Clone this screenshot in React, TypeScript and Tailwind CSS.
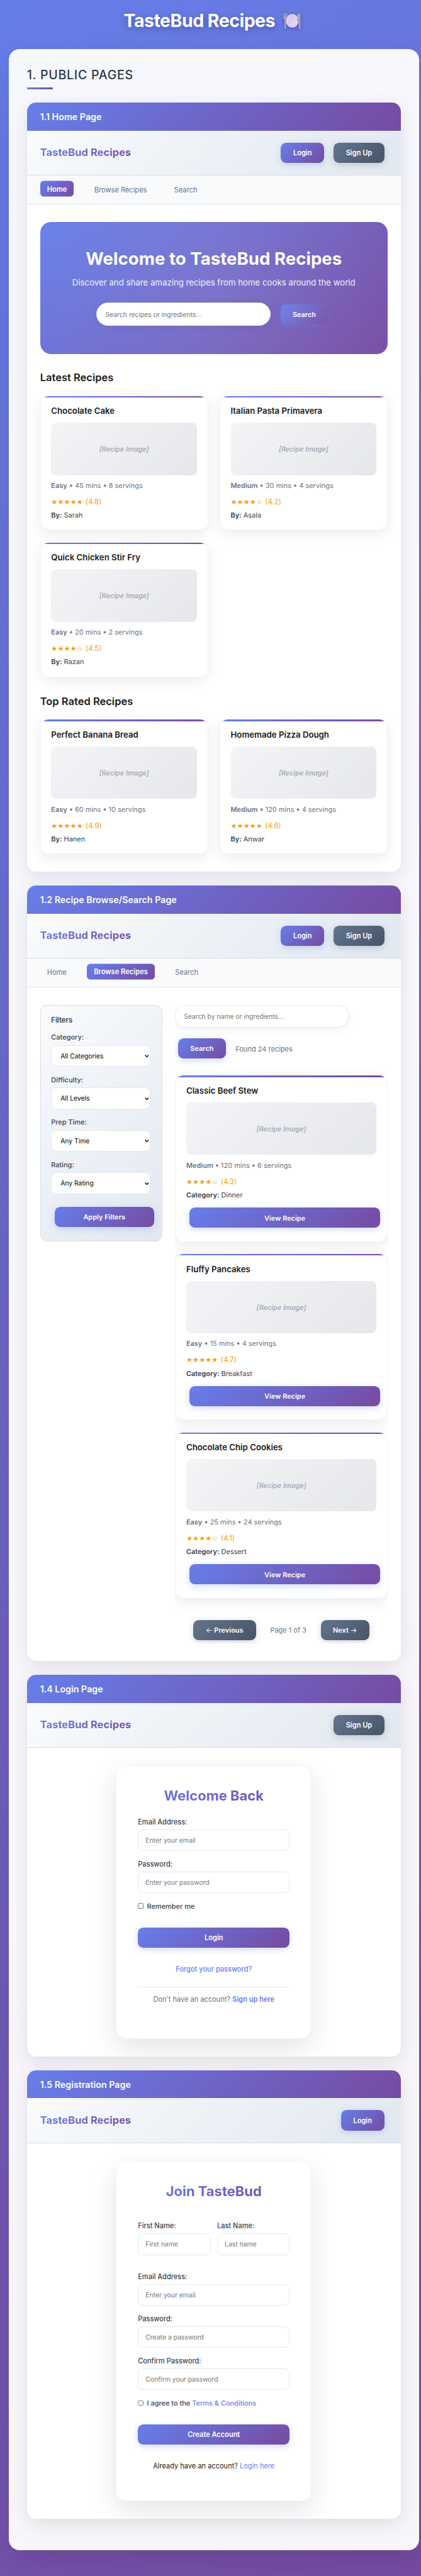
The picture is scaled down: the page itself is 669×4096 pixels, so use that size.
import React from "react";

const FONT = "font-['Inter','Noto_Sans',sans-serif]";
const PRIMARY = "bg-[linear-gradient(135deg,#667eea_0%,#764ba2_100%)]";
const SLATE = "bg-[linear-gradient(135deg,#64748b_0%,#475569_100%)]";

function Button({
  children,
  tone = "primary",
  className = "",
}: {
  children: React.ReactNode;
  tone?: "primary" | "secondary";
  className?: string;
}) {
  const toneClass =
    tone === "primary"
      ? `${PRIMARY} shadow-[0_5px_19px_rgba(102,126,234,0.3)]`
      : `${SLATE} shadow-[0_5px_19px_rgba(100,116,139,0.3)]`;
  return (
    <button
      className={`flex h-[58px] shrink-0 items-center justify-center whitespace-nowrap rounded-[16px] pt-[2px] font-semibold text-white ${toneClass} ${className}`}
    >
      {children}
    </button>
  );
}

function PlateIcon() {
  return (
    <svg
      viewBox="0 0 50 46"
      className="ml-[24px] h-[46px] w-[50px] drop-shadow-[0_5px_6px_rgba(0,0,0,0.3)]"
    >
      <defs>
        <linearGradient id="plate" x1="0" y1="0" x2="1" y2="1">
          <stop offset="0" stopColor="#cfc3ea" />
          <stop offset="1" stopColor="#e4daf5" />
        </linearGradient>
      </defs>
      <ellipse cx="26" cy="21.8" rx="18.4" ry="19.6" fill="#dccff2" />
      <ellipse cx="26" cy="21.8" rx="12.8" ry="13.6" fill="url(#plate)" />
      <path
        d="M0.6 1h2.2v9h1.6V1h2.6v9h1.6V1H12v11c0 3-1.6 4.6-3.6 5.6V43.2a1.5 1.5 0 0 1-1.5 1.5H5.5A1.5 1.5 0 0 1 4 43.2V17.6C2 16.6.6 15 .6 12z"
        fill="#ada3bf"
      />
      <path
        d="M44 0.8c3.2 0 5.4 2 5.4 5v37.4a1.5 1.5 0 0 1-1.5 1.5h-1.6a1.5 1.5 0 0 1-1.5-1.5V24c-2.6 0-4.6-1-4.6-3.4V6c0-3.2 1.4-5.2 3.8-5.2z"
        fill="#ada3bf"
      />
    </svg>
  );
}

function Brand() {
  return (
    <div
      className={`bg-clip-text pt-[1px] text-[29.95px] font-bold leading-[50px] text-transparent ${PRIMARY}`}
    >
      TasteBud Recipes
    </div>
  );
}

function Screen({
  title,
  actions,
  active,
  children,
}: {
  title: string;
  actions: React.ReactNode;
  active?: string;
  children: React.ReactNode;
}) {
  return (
    <section className="w-[1073px] overflow-hidden rounded-[26px] bg-white shadow-[0_13px_52px_rgba(0,0,0,0.1)]">
      <h3
        className={`flex h-[81px] items-center px-[38px] pt-[1.5px] text-[25.8px] font-semibold text-white ${PRIMARY}`}
      >
        {title}
      </h3>
      <div className="flex h-[128.5px] items-center justify-between border-b border-[#d6dce4] bg-[linear-gradient(135deg,#fafbfc_0%,#f1f5f9_30%,#e2e8f0_100%)] pl-[38px] pr-[47px]">
        <Brand />
        <div className="flex gap-[27px]">{actions}</div>
      </div>
      {active && (
        <nav className="flex h-[83px] items-center gap-[38.5px] border-b border-[#e2e5ea] bg-[#f9fafc] px-[38px]">
          {["Home", "Browse Recipes", "Search"].map((item) => (
            <a
              key={item}
              className={
                item === active
                  ? `flex h-[45.5px] -translate-y-[2.6px] items-center rounded-[10px] px-[20px] pt-[2px] text-[20.1px] font-semibold text-white ${PRIMARY}`
                  : "flex h-[45.5px] items-center px-[20px] pt-[2px] text-[20px] text-[#64748b]"
              }
            >
              {item}
            </a>
          ))}
        </nav>
      )}
      <div className="px-[38px] py-[50.5px]">{children}</div>
    </section>
  );
}

type Recipe = {
  name: string;
  level: string;
  info: string;
  stars: string;
  score: string;
  label: string;
  value: string;
};

function RecipeCard({ recipe, tall = false }: { recipe: Recipe; tall?: boolean }) {
  return (
    <article
      className={`overflow-hidden rounded-[24px] border border-[#f0f1f3] bg-white shadow-[0_10px_39px_rgba(0,0,0,0.08)] ${
        tall ? "h-[479px]" : "h-[388px]"
      }`}
    >
      <div className="h-[4.5px] bg-[linear-gradient(90deg,#667eea,#764ba2)]" />
      <div className={`pr-[30px] pt-[18.5px] ${tall ? "pl-[31px]" : "pl-[30px]"}`}>
        <h4 className="text-[23.9px] font-semibold leading-[42px] text-[#1a1a1a]">
          {recipe.name}
        </h4>
        <div className="mt-[12px] flex h-[150.5px] items-center justify-center rounded-[15px] bg-[linear-gradient(135deg,#f3f4f6_0%,#e5e7eb_100%)] pt-[2px] text-[19.76px] font-medium italic text-[#9ca3af]">
          [Recipe Image]
        </div>
        <p className="mt-[15px] text-[19.8px] leading-[32px] text-[#6b7280]">
          <span className="font-semibold">{recipe.level}</span> • {recipe.info}
        </p>
        <p className="mt-[15.4px] flex text-[20.6px] leading-[32px] text-[#f59e0b]">
          <span className="w-[99px] whitespace-nowrap font-['DejaVu_Sans'] text-[20.4px]">
            {recipe.stars}
          </span>
          ({recipe.score})
        </p>
        <p className="mt-[6.4px] text-[19.8px] leading-[32px] text-[#374151]">
          <span className="font-semibold">{recipe.label}:</span> {recipe.value}
        </p>
        {tall && (
          <Button className="ml-[10px] mt-[18.6px] w-[546px] text-[19.76px]">View Recipe</Button>
        )}
      </div>
    </article>
  );
}

const latest: Recipe[] = [
  { name: "Chocolate Cake", level: "Easy", info: "45 mins • 8 servings", stars: "★★★★★", score: "4.8", label: "By", value: "Sarah" },
  { name: "Italian Pasta Primavera", level: "Medium", info: "30 mins • 4 servings", stars: "★★★★☆", score: "4.2", label: "By", value: "Asala" },
  { name: "Quick Chicken Stir Fry", level: "Easy", info: "20 mins • 2 servings", stars: "★★★★☆", score: "4.5", label: "By", value: "Razan" },
];

const topRated: Recipe[] = [
  { name: "Perfect Banana Bread", level: "Easy", info: "60 mins • 10 servings", stars: "★★★★★", score: "4.9", label: "By", value: "Hanen" },
  { name: "Homemade Pizza Dough", level: "Medium", info: "120 mins • 4 servings", stars: "★★★★★", score: "4.8", label: "By", value: "Anwar" },
];

const results: Recipe[] = [
  { name: "Classic Beef Stew", level: "Medium", info: "120 mins • 6 servings", stars: "★★★★☆", score: "4.3", label: "Category", value: "Dinner" },
  { name: "Fluffy Pancakes", level: "Easy", info: "15 mins • 4 servings", stars: "★★★★★", score: "4.7", label: "Category", value: "Breakfast" },
  { name: "Chocolate Chip Cookies", level: "Easy", info: "25 mins • 24 servings", stars: "★★★★☆", score: "4.1", label: "Category", value: "Dessert" },
];

const filters = [
  ["Category:", "All Categories"],
  ["Difficulty:", "All Levels"],
  ["Prep Time:", "Any Time"],
  ["Rating:", "Any Rating"],
];

function SearchInput({ placeholder }: { placeholder: string }) {
  return (
    <input
      placeholder={placeholder}
      className="block h-[66.5px] w-[500px] rounded-[33px] border-2 border-[#e5e7eb] bg-white px-[24.5px] pt-[1px] text-[18.72px] shadow-[0_5px_26px_rgba(0,0,0,0.06)] placeholder:text-[#757575]"
    />
  );
}

function SectionTitle({ children, className }: { children: string; className: string }) {
  return (
    <h3
      className={`mb-[29px] text-[29.85px] font-semibold leading-[44px] text-[#1a1a1a] ${className}`}
    >
      {children}
    </h3>
  );
}

function HomePage() {
  return (
    <>
      <div className="flex h-[379px] flex-col items-center rounded-[31px] bg-[radial-gradient(circle_747px_at_center,rgba(255,255,255,0.1),rgba(255,255,255,0)),linear-gradient(135deg,#667eea_0%,#764ba2_100%)] pt-[74.5px] text-white">
        <h2 className="text-[49.9px] font-bold leading-[62.4px]">
          Welcome to TasteBud Recipes
        </h2>
        <p className="mt-[19.5px] text-[23.92px] leading-[38px] text-white/90">
          Discover and share amazing recipes from home cooks around the world
        </p>
        <div className="mt-[37.5px] flex items-center">
          <SearchInput placeholder="Search recipes or ingredients..." />
          <button className="ml-[29px] mr-[10px] h-[58px] w-[136px] rounded-[16px] bg-[linear-gradient(135deg,#7085e9_0%,#7d53a5_100%)] pt-[2px] text-[19.76px] font-semibold text-white shadow-[0_5px_19px_rgba(102,126,234,0.3)]">
            Search
          </button>
        </div>
      </div>
      <SectionTitle className="mt-[46px]">Latest Recipes</SectionTitle>
      <div className="grid grid-cols-2 gap-[33px]">
        {latest.map((r) => (
          <RecipeCard key={r.name} recipe={r} />
        ))}
      </div>
      <SectionTitle className="mt-[47.5px]">Top Rated Recipes</SectionTitle>
      <div className="grid grid-cols-2 gap-[33px]">
        {topRated.map((r) => (
          <RecipeCard key={r.name} recipe={r} />
        ))}
      </div>
    </>
  );
}

function BrowsePage() {
  return (
    <div className="flex items-start justify-between">
      <aside className="h-[679px] w-[350px] rounded-[20px] border border-[#d9dfe8] bg-[linear-gradient(135deg,#fafbfc_0%,#f1f5f9_30%,#e2e8f0_100%)] pl-[30px] pr-[31px] pt-[27px]">
        <h4 className="mb-[18px] text-[20.3px] font-semibold leading-[32px] text-[#374151]">
          Filters
        </h4>
        {filters.map(([label, value]) => (
          <div key={label} className="mb-[23px]">
            <div className="text-[19.8px] font-medium leading-[32px] text-[#374151]">{label}</div>
            <div className="mt-[5px] flex h-[62px] items-center justify-between rounded-[15px] border-2 border-[#e5e7eb] bg-white pl-[25px] pr-[4px] pt-[2px] text-[18.72px] text-black">
              {value}
              <svg viewBox="0 0 12 8" className="h-[8px] w-[12px]" fill="none" stroke="#000" strokeWidth="2.4">
                <path d="M1 1l5 5.2L11 1" />
              </svg>
            </div>
          </div>
        ))}
        <Button className="ml-[10px] mt-[36px] w-[285px] text-[19.76px]">Apply Filters</Button>
      </aside>
      <div className="h-[1834px] w-[610.5px] overflow-hidden">
        <SearchInput placeholder="Search by name or ingredients..." />
        <div className="mt-[29.5px] flex items-center pl-[10px] text-[19.85px] text-[#6b7280]">
          <Button className="mr-[28.5px] w-[136px] text-[19.76px]">Search</Button>
          <span className="pt-[4px]">Found 24 recipes</span>
        </div>
        <div className="mt-[48px] flex flex-col gap-[33px]">
          {results.map((r) => (
            <RecipeCard key={r.name} recipe={r} tall />
          ))}
        </div>
        <div className="mt-[61px] flex items-center justify-center gap-[41px] text-[19.85px] text-[#6b7280]">
          <Button tone="secondary" className="w-[180px] gap-[5px]">
            <span className="font-normal">←</span>
            Previous
          </Button>
          <span className="pt-[1px]">Page 1 of 3</span>
          <Button tone="secondary" className="w-[139px] gap-[5px]">
            Next
            <span className="font-normal">→</span>
          </Button>
        </div>
      </div>
    </div>
  );
}

function Field({
  label,
  placeholder,
  className = "",
}: {
  label: string;
  placeholder: string;
  className?: string;
}) {
  return (
    <label className={`block ${className}`}>
      <span className="block text-[19.9px] font-medium leading-[34px] text-[#374151]">{label}</span>
      <input
        placeholder={placeholder}
        className="mt-[4.2px] block h-[62px] w-full rounded-[15px] border-2 border-[#e5e7eb] bg-white px-[20px] pt-[1px] text-[18.8px] placeholder:text-[#757575]"
      />
    </label>
  );
}

function AuthBox({
  title,
  className,
  children,
}: {
  title: string;
  className: string;
  children: React.ReactNode;
}) {
  return (
    <div
      className={`mx-auto w-[561px] rounded-[30px] border border-[#f3f3f5] bg-white px-[61px] pt-[62.5px] shadow-[0_26px_78px_rgba(0,0,0,0.11)] ${className}`}
    >
      <h2
        className={`mb-[-0.5px] bg-clip-text text-center text-[39.7px] font-bold leading-[50px] text-transparent ${PRIMARY}`}
      >
        {title}
      </h2>
      {children}
    </div>
  );
}

function CheckRow({ children }: { children: React.ReactNode }) {
  return (
    <div className="mt-[20.8px] flex h-[32px] items-center text-[19.8px] font-medium text-[#374151]">
      <span className="mr-[11px] h-[15px] w-[15px] rounded-[3px] border border-[#767676] bg-white" />
      <span className="pt-[2px]">{children}</span>
    </div>
  );
}

const loginButton = <Button className="w-[124px] text-[20px]">Login</Button>;
const signUpButton = (
  <Button tone="secondary" className="w-[146px] text-[20px]">
    Sign Up
  </Button>
);

export default function App() {
  return (
    <div className="h-[4096px] w-full overflow-hidden bg-[linear-gradient(135deg,#667eea_0%,#764ba2_100%)]">
      <div className={`w-[1208px] [zoom:0.55381] ${FONT}`}>
        <header className="flex h-[141.5px] items-start justify-center pl-[10px] pt-[21px]">
          <h1 className="flex h-[80px] items-center text-[51.6px] font-bold tracking-[-0.019em] text-white [text-shadow:0_5px_20px_rgba(0,0,0,0.3)]">
            TasteBud Recipes
            <PlateIcon />
          </h1>
        </header>
        <main className="ml-[25px] h-[7180px] w-[1177px] rounded-[31px] bg-white/95 px-[52px] pt-[53px] shadow-[0_26px_78px_rgba(0,0,0,0.13)]">
          <h2 className="text-[35.4px] font-medium leading-[42.6px] tracking-[0.037em] text-[#2d3748]">
            1. PUBLIC PAGES
          </h2>
          <div className="mt-[14px] h-[5px] w-[75px] rounded-[2px] bg-[linear-gradient(90deg,#667eea,#764ba2)]" />
          <div className="mt-[38px] flex flex-col gap-[39px]">
            <Screen title="1.1 Home Page" active="Home" actions={<>{loginButton}{signUpButton}</>}>
              <HomePage />
            </Screen>
            <Screen
              title="1.2 Recipe Browse/Search Page"
              active="Browse Recipes"
              actions={<>{loginButton}{signUpButton}</>}
            >
              <BrowsePage />
            </Screen>
            <Screen title="1.4 Login Page" actions={signUpButton}>
              <AuthBox title="Welcome Back" className="h-[786px]">
                <Field className="mt-[32px]" label="Email Address:" placeholder="Enter your email" />
                <Field className="mt-[20.8px]" label="Password:" placeholder="Enter your password" />
                <CheckRow>Remember me</CheckRow>
                <Button className="mt-[46px] w-full text-[20px]">Login</Button>
                <p className="mt-[47px] text-center text-[19.9px] font-medium leading-[32px] text-[#667eea]">
                  Forgot your password?
                </p>
                <div className="mt-[33px] border-t border-[#e5e7eb] pt-[21px] text-center text-[19.95px] leading-[32px] text-[#6b7280]">
                  Don't have an account?{" "}
                  <span className="font-semibold text-[#667eea]">Sign up here</span>
                </div>
              </AuthBox>
            </Screen>
            <Screen
              title="1.5 Registration Page"
              actions={<Button className="w-[125px] text-[20px]">Login</Button>}
            >
              <AuthBox title="Join TasteBud" className="h-[978px]">
                <div className="mt-[57px] grid grid-cols-2 gap-[19px]">
                  <Field label="First Name:" placeholder="First name" />
                  <Field label="Last Name:" placeholder="Last name" />
                </div>
                <Field className="mt-[45.8px]" label="Email Address:" placeholder="Enter your email" />
                <Field className="mt-[20.8px]" label="Password:" placeholder="Create a password" />
                <Field className="mt-[20.8px]" label="Confirm Password:" placeholder="Confirm your password" />
                <CheckRow>
                  I agree to the <span className="text-[#667eea]">Terms &amp; Conditions</span>
                </CheckRow>
                <Button className="mt-[46px] w-full text-[19.9px]">Create Account</Button>
                <p className="mt-[47px] text-center text-[19.95px] leading-[32px] text-[#1a1a1a]">
                  Already have an account? <span className="text-[#667eea]">Login here</span>
                </p>
              </AuthBox>
            </Screen>
          </div>
        </main>
      </div>
    </div>
  );
}
